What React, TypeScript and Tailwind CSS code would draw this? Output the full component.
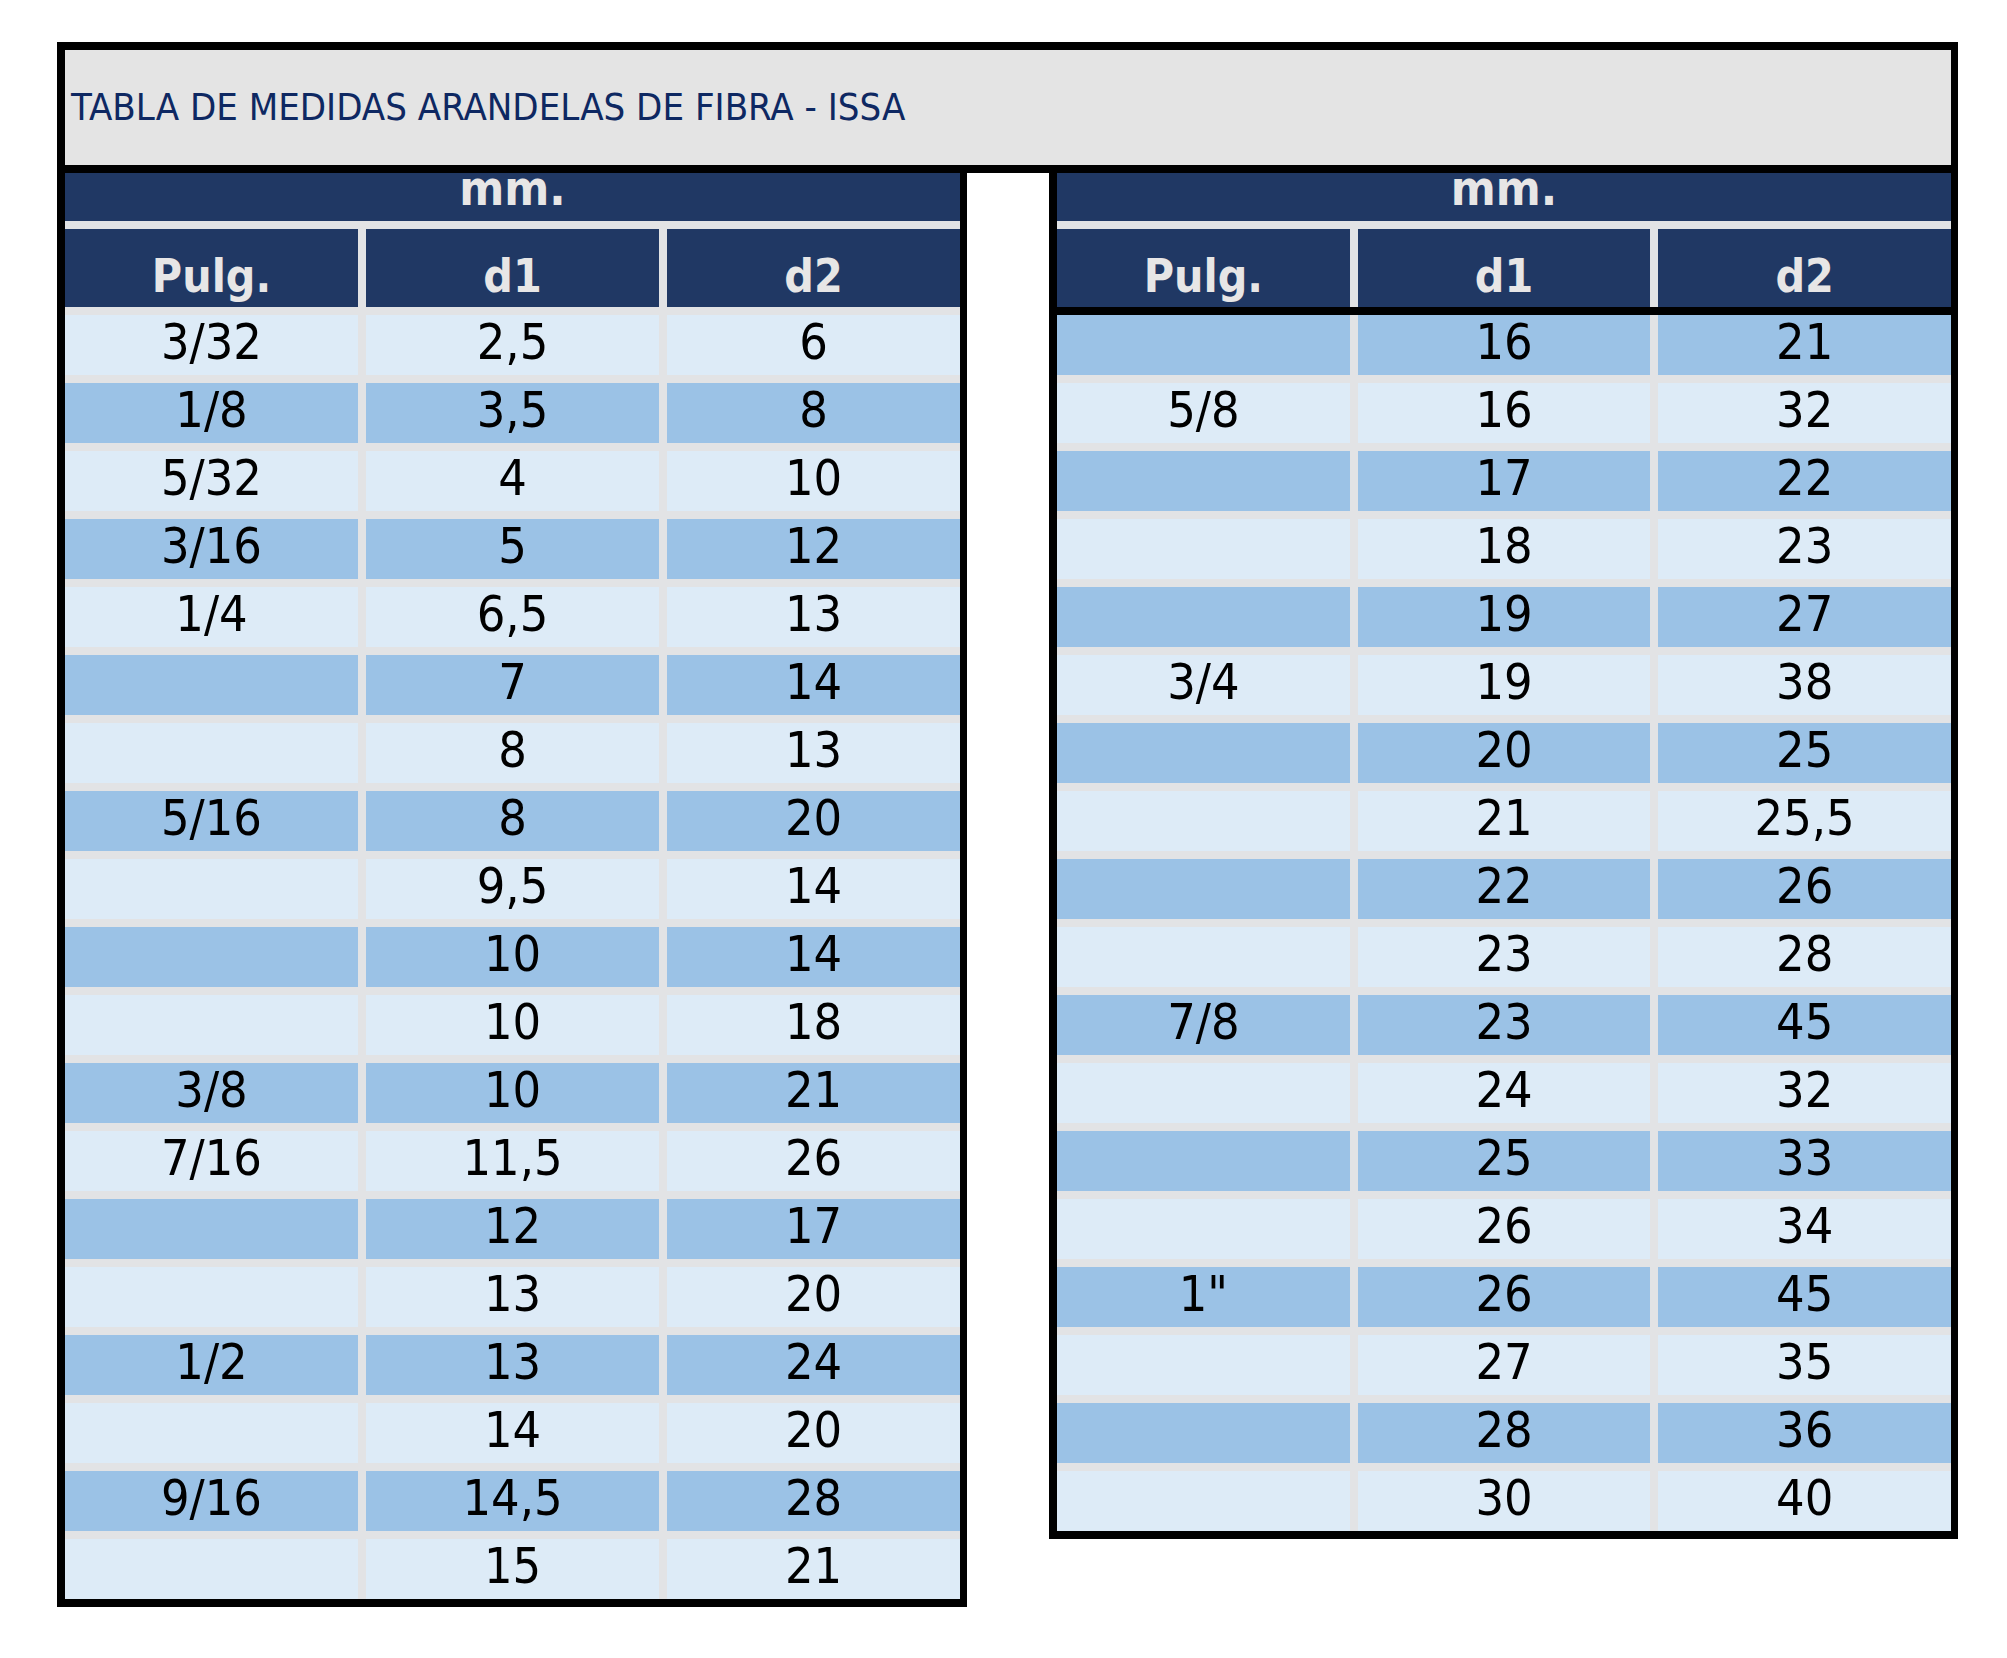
import React from "react";

const FONT = '"DejaVu Sans Condensed", "DejaVu Sans", sans-serif';

const left: [string, string, string][] = [
  ["3/32", "2,5", "6"],
  ["1/8", "3,5", "8"],
  ["5/32", "4", "10"],
  ["3/16", "5", "12"],
  ["1/4", "6,5", "13"],
  ["", "7", "14"],
  ["", "8", "13"],
  ["5/16", "8", "20"],
  ["", "9,5", "14"],
  ["", "10", "14"],
  ["", "10", "18"],
  ["3/8", "10", "21"],
  ["7/16", "11,5", "26"],
  ["", "12", "17"],
  ["", "13", "20"],
  ["1/2", "13", "24"],
  ["", "14", "20"],
  ["9/16", "14,5", "28"],
  ["", "15", "21"],
];

const right: [string, string, string][] = [
  ["", "16", "21"],
  ["5/8", "16", "32"],
  ["", "17", "22"],
  ["", "18", "23"],
  ["", "19", "27"],
  ["3/4", "19", "38"],
  ["", "20", "25"],
  ["", "21", "25,5"],
  ["", "22", "26"],
  ["", "23", "28"],
  ["7/8", "23", "45"],
  ["", "24", "32"],
  ["", "25", "33"],
  ["", "26", "34"],
  ["1\"", "26", "45"],
  ["", "27", "35"],
  ["", "28", "36"],
  ["", "30", "40"],
];

function Table({
  rows,
  firstDark,
  blackUnderHeader,
  className,
}: {
  rows: [string, string, string][];
  firstDark: boolean;
  blackUnderHeader: boolean;
  className: string;
}) {
  return (
    <div className={`${className} border-black border-b-[8px] border-l-[8px] border-r-[7px] bg-[#e2e3e5]`}>
      <div className="h-[48px] bg-[#203864] text-center text-[48px] font-bold leading-[31px] text-[#e7e6e6]">
        mm.
      </div>
      <div className="grid grid-cols-3 gap-x-[8px] pt-[8px]">
        {["Pulg.", "d1", "d2"].map((h) => (
          <div
            key={h}
            className="h-[78px] bg-[#203864] text-center text-[46px] font-bold leading-[94px] text-[#e7e6e6]"
          >
            {h}
          </div>
        ))}
      </div>
      {blackUnderHeader ? (
        <div className="h-[8px] bg-black" />
      ) : (
        <div className="h-[8px]" />
      )}
      <div className="grid grid-cols-3 gap-x-[8px] gap-y-[8px]">
        {rows.map((r, i) => {
          const dark = (i % 2 === 0) === firstDark;
          const bg = dark ? "bg-[#9bc2e6]" : "bg-[#ddebf7]";
          return r.map((c, j) => (
            <div
              key={`${i}-${j}`}
              className={`h-[60px] ${bg} overflow-visible text-center text-[50px] leading-[55px] text-black`}
            >
              {c}
            </div>
          ));
        })}
      </div>
    </div>
  );
}

export default function App() {
  return (
    <div className="min-h-[1658px] w-[2007px] bg-white" style={{ fontFamily: FONT }}>
      <div className="ml-[57px] flex w-[1901px] flex-col pt-[42px]">
        <div className="h-[131px] border-[8px] border-r-[7px] border-black bg-[#e4e4e4] pl-[6px]">
          <div className="whitespace-nowrap text-[38px] leading-[114px] text-[#0e2862]">
            TABLA DE MEDIDAS ARANDELAS DE FIBRA - ISSA
          </div>
        </div>
        <div className="flex items-start justify-between">
          <Table rows={left} firstDark={false} blackUnderHeader={false} className="w-[910px]" />
          <Table rows={right} firstDark={true} blackUnderHeader={true} className="w-[909px]" />
        </div>
      </div>
    </div>
  );
}
